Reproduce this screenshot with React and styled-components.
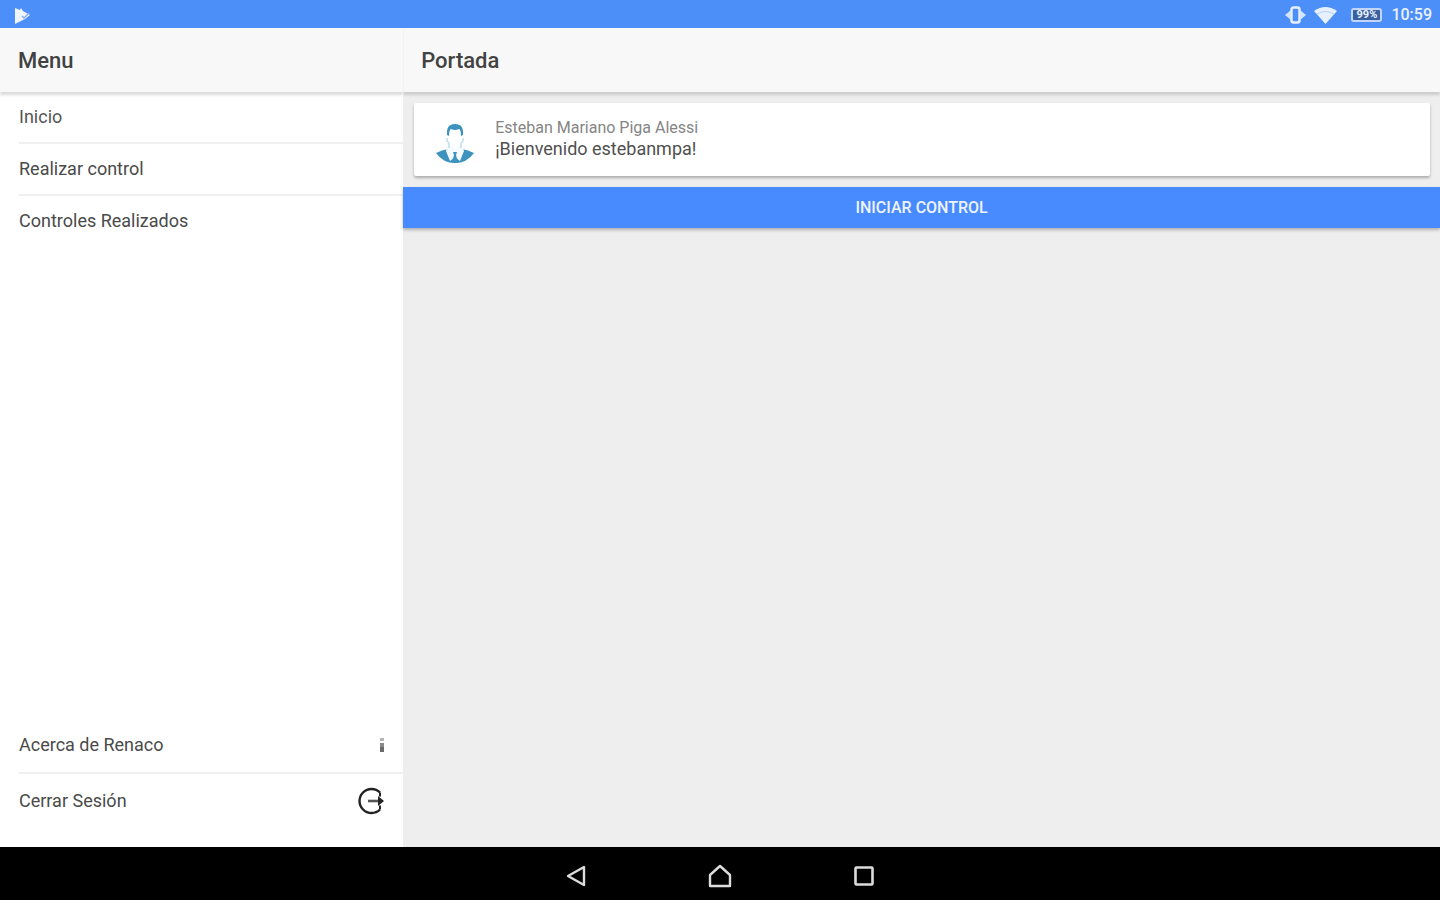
import React, { useState } from 'react';
import styled, { createGlobalStyle } from 'styled-components';

const GlobalStyle = createGlobalStyle`
  * {
    box-sizing: border-box;
  }

  body {
    margin: 0;
    font-family: Roboto, "Liberation Sans", sans-serif;
    background-color: #eeeeee;
  }
`;

const Screen = styled.div`
  min-height: 100vh;
  display: flex;
  flex-direction: column;
`;

const StatusBar = styled.div`
  height: 28px;
  padding: 2px 8px 0 13px;
  display: flex;
  align-items: center;
  justify-content: space-between;
  background-color: #4d8ff9;
  color: #eaf2ff;
`;

const StatusIcons = styled.div`
  display: flex;
  align-items: center;
`;

const StatusIcon = styled.svg`
  display: block;
  margin-right: ${props => props.$gap || 0}px;
`;

const Battery = styled.span`
  width: 31px;
  height: 14px;
  margin-right: 9px;
  border: 2px solid #c3d6f8;
  border-radius: 3px;
  background-color: #38609f;
  font-size: 11px;
  font-weight: 700;
  line-height: 10px;
  text-align: center;
`;

const Clock = styled.span`
  font-size: 16px;
  font-weight: 500;
  line-height: 20px;
`;

const Split = styled.div`
  flex: 1;
  display: flex;
`;

const SideMenu = styled.nav`
  width: 28%;
  display: flex;
  flex-direction: column;
  background-color: #ffffff;
`;

const Page = styled.main`
  flex: 1;
  display: flex;
  flex-direction: column;
  background-color: #eeeeee;
`;

const Header = styled.header`
  height: 64px;
  padding: 2px 18px 0;
  display: flex;
  align-items: center;
  background-color: #f8f8f8;
  box-shadow: 0 3px 3px rgba(0, 0, 0, 0.15);
  clip-path: inset(0 0 -8px 0);
`;

const Title = styled.h1`
  margin: 0;
  font-size: 22px;
  font-weight: 500;
  line-height: 28px;
  color: #424242;
`;

const List = styled.ul`
  margin: ${props => (props.$bottom ? 'auto 0 19px' : '0')};
  padding: 0 0 0 19px;
  list-style: none;
`;

const Item = styled.li`
  border-bottom: 2px solid #f0f0f0;

  &:last-child {
    border-bottom: none;
  }
`;

const ItemLink = styled.a`
  min-height: ${props => (props.$tall ? 54 : 50)}px;
  padding-right: 18px;
  display: flex;
  align-items: center;
  justify-content: space-between;
  font-size: 18px;
  line-height: 24px;
  color: ${props => (props.$active ? '#555555' : '#4a4a4a')};
  text-decoration: none;
`;

const Card = styled.section`
  margin: 11px 10px 11px 11px;
  padding: 0 21px;
  height: 73px;
  display: flex;
  align-items: center;
  gap: 20px;
  background-color: #ffffff;
  border-radius: 2px;
  box-shadow: 0 2px 3px rgba(0, 0, 0, 0.28);
`;

const Avatar = styled.svg`
  display: block;
  margin-top: 8px;
`;

const CardText = styled.div`
  padding-bottom: 2px;
`;

const Name = styled.p`
  margin: 0;
  font-size: 16px;
  line-height: 20px;
  color: #858585;
`;

const Welcome = styled.p`
  margin: 0;
  font-size: 18px;
  line-height: 22px;
  color: #505050;
`;

const StartButton = styled.button`
  width: 100%;
  height: 41px;
  padding: 0;
  border: none;
  background-color: #488aff;
  box-shadow: 0 2px 3px rgba(0, 0, 0, 0.26);
  color: #eef4ff;
  font-family: inherit;
  font-size: 16px;
  font-weight: 500;
  text-transform: uppercase;
  cursor: pointer;
`;

const NavBar = styled.div`
  height: 53px;
  padding-top: 4px;
  display: flex;
  align-items: center;
  justify-content: center;
  gap: 112px;
  background-color: #000000;
`;

const NavButton = styled.button`
  width: 32px;
  height: 32px;
  padding: 0;
  display: flex;
  align-items: center;
  justify-content: center;
  border: none;
  background: none;
  color: #dcdcdc;
  cursor: pointer;
`;

const InfoIcon = () => (
  <svg width="6" height="18" viewBox="0 0 6 18" aria-hidden="true">
    <rect x="1" y="2" width="4" height="3" fill="#b5b5b5" />
    <path d="M1 7h4v9H1z" fill="#8a8a8a" />
    <path d="M1 11h4v5H1z" fill="#6a6a6a" />
  </svg>
);

const LogoutIcon = () => (
  <svg width="27" height="28" viewBox="0 0 27 28" fill="none" stroke="#222222" aria-hidden="true">
    <path d="M22 5.5A12 12 0 1 0 22 22.5" strokeWidth="2.4" />
    <path d="M22 5.5v4M22 18.5v4" strokeWidth="2" />
    <path d="M10 14h12" strokeWidth="2.6" stroke="#555555" />
    <path d="M20 9l6 5-6 5z" fill="#222222" stroke="none" />
  </svg>
);

const UserIcon = () => (
  <Avatar width="40" height="42" viewBox="0 0 40 42" aria-hidden="true">
    <path d="M1 30q6-3 12-4h14q6 1 12 4-7 10-19 10T1 30z" fill="#3d93bd" />
    <path d="M13 22h14l2 6-4 10-5-4-5 4-4-10z" fill="#f4fafd" />
    <path d="M18 29h4l-1 3 2 8h-6l2-8z" fill="#3d93bd" />
    <path d="M13 11q0-7 7-7t7 7v6q-1 7-7 9-6-2-7-9z" fill="#ffffff" />
    <path d="M12 15v3l2 2v5M28 15v3l-2 2v5" fill="none" stroke="#b9dbea" strokeWidth="1.4" />
    <path d="M12 12Q11 1 20 1t8 11l-2 1q0-6-2-7-4 2-8 0-2 1-2 7z" fill="#3d93bd" />
  </Avatar>
);

const sections = ['Inicio', 'Realizar control', 'Controles Realizados'];

const App = () => {
  const [selected, setSelected] = useState('Inicio');

  return (
    <>
      <GlobalStyle />
      <Screen>
        <StatusBar>
          <StatusIcon width="18" height="18" viewBox="0 0 18 18" aria-hidden="true">
            <path d="M2 2l5 2 1-2 2 3 7 4-5 4-10 5z" fill="#eff5ff" />
            <path d="M9 10l2 2 5-5" stroke="#7fadf9" strokeWidth="1.4" fill="none" />
          </StatusIcon>
          <StatusIcons>
            <StatusIcon $gap={8} width="21" height="18" viewBox="0 0 21 18" aria-hidden="true">
              <rect x="6.5" y="1.5" width="8" height="15" rx="2" fill="none" stroke="#e6f0ff" strokeWidth="2.4" />
              <path d="M6 4v10L0 9zM15 4v10l6-5z" fill="#d5e4fe" />
            </StatusIcon>
            <StatusIcon $gap={14} width="23" height="18" viewBox="0 0 23 18" aria-hidden="true">
              <path d="M0 5q11.5-8 23 0L11.5 18z" fill="#e6f0ff" />
              <path d="M3 8q8.5-5 17 0" stroke="#b5d0fd" strokeWidth="1" fill="none" />
            </StatusIcon>
            <Battery>99%</Battery>
            <Clock>10:59</Clock>
          </StatusIcons>
        </StatusBar>

        <Split>
          <SideMenu>
            <Header>
              <Title>Menu</Title>
            </Header>
            <List>
              {sections.map(name => (
                <Item key={name}>
                  <ItemLink href="#" $active={selected === name} onClick={() => setSelected(name)}>
                    {name}
                  </ItemLink>
                </Item>
              ))}
            </List>
            <List $bottom>
              <Item>
                <ItemLink href="#" $tall>Acerca de Renaco <InfoIcon /></ItemLink>
              </Item>
              <Item>
                <ItemLink href="#" $tall>Cerrar Sesión <LogoutIcon /></ItemLink>
              </Item>
            </List>
          </SideMenu>

          <Page>
            <Header>
              <Title>Portada</Title>
            </Header>
            <Card>
              <UserIcon />
              <CardText>
                <Name>Esteban Mariano Piga Alessi</Name>
                <Welcome>¡Bienvenido estebanmpa!</Welcome>
              </CardText>
            </Card>
            <StartButton type="button">Iniciar control</StartButton>
          </Page>
        </Split>

        <NavBar>
          <NavButton type="button" aria-label="Atrás">
            <svg width="20" height="22" viewBox="0 0 20 22" fill="none" stroke="currentColor" strokeWidth="2.4">
              <path d="M18 2v18L2 11z" strokeLinejoin="round" />
            </svg>
          </NavButton>
          <NavButton type="button" aria-label="Inicio">
            <svg width="24" height="24" viewBox="0 0 24 24" fill="none" stroke="currentColor" strokeWidth="2.4">
              <path d="M2 22V11L12 2l10 9v11z" strokeLinejoin="round" />
            </svg>
          </NavButton>
          <NavButton type="button" aria-label="Recientes">
            <svg width="20" height="20" viewBox="0 0 20 20" fill="none" stroke="currentColor" strokeWidth="2.6">
              <rect x="1.5" y="1.5" width="17" height="17" rx="1" />
            </svg>
          </NavButton>
        </NavBar>
      </Screen>
    </>
  );
};

export default App;
